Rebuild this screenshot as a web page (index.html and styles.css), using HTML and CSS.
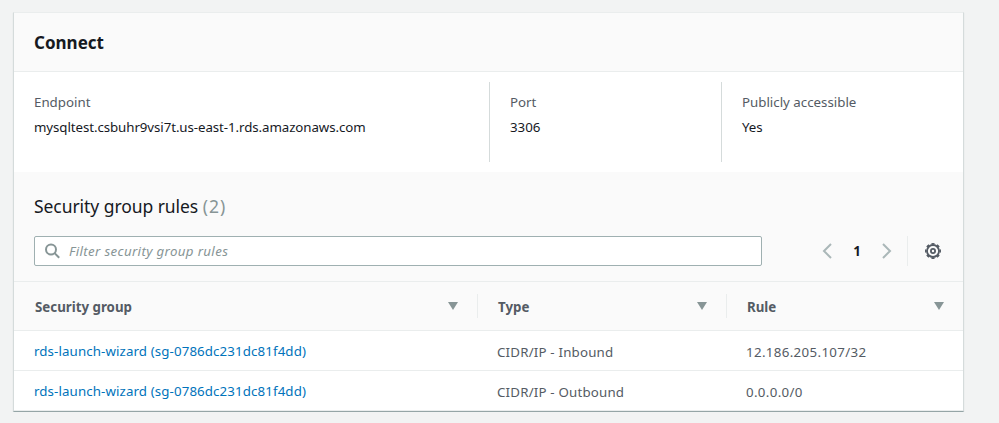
FILE: index.html
```html
<!DOCTYPE html>
<html lang="en">
<head>
<meta charset="utf-8">
<title>Connect</title>
<link rel="stylesheet" href="styles.css">
</head>
<body>
<main class="card">
  <header class="card-header"><h2>Connect</h2></header>
  <dl class="details">
    <div class="detail"><dt>Endpoint</dt><dd class="endpoint">mysqltest.csbuhr9vsi7t.us-east-1.rds.amazonaws.com</dd></div>
    <div class="detail"><dt>Port</dt><dd>3306</dd></div>
    <div class="detail"><dt>Publicly accessible</dt><dd>Yes</dd></div>
  </dl>
  <section class="tools">
    <h3>Security group rules <span class="count">(2)</span></h3>
    <div class="toolbar">
      <label class="search">
        <svg width="16" height="16" viewBox="0 0 16 16" fill="none" stroke="#879596" stroke-width="2"><circle cx="6" cy="6.500" r="5"/><path d="M9.600 10.100 14.200 14.700"/></svg>
        <input type="text" placeholder="Filter security group rules">
      </label>
      <nav class="pager">
        <svg width="10" height="16" viewBox="0 0 10 16" fill="none" stroke="#aab7b8" stroke-width="2"><path d="M9 1 2 8l7 7"/></svg>
        <b>1</b>
        <svg width="10" height="16" viewBox="0 0 10 16" fill="none" stroke="#aab7b8" stroke-width="2"><path d="m1 1 7 7-7 7"/></svg>
      </nav>
      <div class="settings">
        <svg width="16" height="16" viewBox="0 0 16 16" fill="none" stroke="#545b64"><circle cx="8" cy="8" r="6" stroke-width="1.800"/><circle cx="8" cy="8" r="7.200" stroke-width="1.600" pathLength="80" stroke-dasharray="5.600 4.400" stroke-dashoffset="2.800"/><circle cx="8" cy="8" r="2.100" stroke-width="1.800"/></svg>
      </div>
    </div>
  </section>
  <table>
    <colgroup><col class="col-group"><col class="col-type"><col></colgroup>
    <thead>
      <tr>
        <th><div class="th"><span>Security group</span><i class="sort"></i></div></th>
        <th><div class="th"><span>Type</span><i class="sort"></i></div></th>
        <th><div class="th"><span>Rule</span><i class="sort"></i></div></th>
      </tr>
    </thead>
    <tbody>
      <tr><td><a>rds-launch-wizard (sg-0786dc231dc81f4dd)</a></td><td class="type">CIDR/IP - Inbound</td><td class="rule">12.186.205.107/32</td></tr>
      <tr><td><a>rds-launch-wizard (sg-0786dc231dc81f4dd)</a></td><td class="type">CIDR/IP - Outbound</td><td class="rule">0.0.0.0/0</td></tr>
    </tbody>
  </table>
</main>
</body>
</html>
```
FILE: styles.css
```css
* { box-sizing: border-box; }
body {
  margin: 0;
  padding: 12px 35px 0 13px;
  background: #f2f3f3;
  color: #16191f;
  font: 13.3px/20px "Noto Sans", "Open Sans", sans-serif;
}
h2, h3, dl, dd { margin: 0; }
.card {
  height: 400px;
  background: #fff;
  border: 1px solid #d5dbdb;
  border-top-color: #eaeded;
  border-bottom-color: #95a5a6;
  box-shadow: 0 1px 1px #d5dbdb;
}
.card-header {
  height: 59px;
  padding: 19px 20px 17px;
  background: #fafafa;
  border-bottom: 1px solid #eaeded;
}
h2 { font-size: 17px; line-height: 22px; }
.details {
  display: grid;
  grid-template-columns: 475px 232px 1fr;
  height: 100px;
  padding: 10px 0;
}
.detail { padding: 10px 20px; }
.detail + .detail { border-left: 1px solid #d5dbdb; }
dt { color: #545b64; }
dd { margin-top: 5px; }
.endpoint { letter-spacing: -.08px; }
.tools {
  height: 110px;
  padding: 22px 20px 15px;
  background: #fafafa;
  border-bottom: 1px solid #eaeded;
}
h3 { font-size: 17.5px; line-height: 24px; font-weight: 400; letter-spacing: -.06px; }
.count { color: #879596; letter-spacing: 1px; }
.toolbar { display: flex; align-items: center; margin-top: 18px; }
.search {
  display: flex;
  align-items: center;
  width: 728px;
  height: 30px;
  padding: 0 10px;
  background: #fff;
  border: 1px solid #9fb0b1;
  border-radius: 2px;
}
input {
  flex: 1;
  margin-left: 8px;
  padding: 0;
  border: 0;
  outline: 0;
  background: none;
  font: inherit;
}
input::placeholder { color: #879596; font-style: italic; letter-spacing: .35px; }
.pager {
  display: flex;
  align-items: center;
  justify-content: space-between;
  width: 70px;
  margin-left: 60px;
}
.settings {
  display: flex;
  align-items: center;
  height: 30px;
  margin-left: 15px;
  padding-left: 17px;
  border-left: 1px solid #eaeded;
}
table { width: 100%; border-spacing: 0; table-layout: fixed; }
.col-group { width: 463px; }
.col-type { width: 249px; }
th {
  height: 49px;
  padding: 0;
  background: #fafafa;
  border-bottom: 1px solid #eaeded;
  color: #545b64;
  text-align: left;
}
.th {
  display: flex;
  align-items: center;
  justify-content: space-between;
  height: 24px;
  padding: 0 19px 0 20px;
  border-left: 1px solid #eaeded;
}
.th span { padding-top: 2px; }
th:first-child .th { border-left-color: transparent; }
.sort {
  border: 5.5px solid transparent;
  border-top: 8px solid #879596;
  border-bottom: 0;
}
td {
  height: 40px;
  padding: 3px 20px 0;
  border-bottom: 1px solid #eaeded;
  color: #545b64;
}
td:first-child { padding-top: 1px; }
a { color: #0073bb; letter-spacing: .11px; }
.type { letter-spacing: .19px; }
.rule { letter-spacing: .35px; }
```
